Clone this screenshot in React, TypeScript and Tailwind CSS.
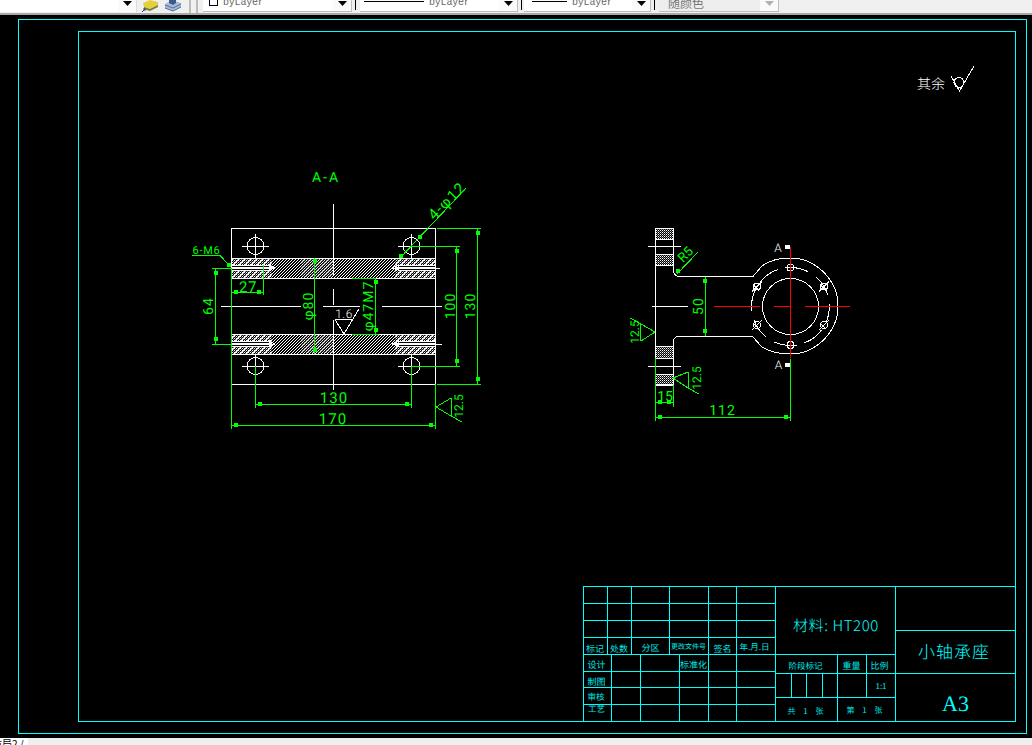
import React from "react";

const G = "#00ff00";
const C = "#00ffff";
const W = "#ffffff";
const R = "#ff0000";

type Seg = [number, number, number, number];

function Lines({ c, d }: { c: string; d: Seg[] }) {
  return (
    <g stroke={c} fill="none">
      {d.map((s, i) => (
        <line key={i} x1={s[0]} y1={s[1]} x2={s[2]} y2={s[3]} />
      ))}
    </g>
  );
}

function Ticks({ d }: { d: [number, number][] }) {
  return (
    <g fill={G} stroke="none">
      {d.map((p, i) => (
        <rect key={i} x={p[0] - 2} y={p[1] - 2} width={4} height={4} />
      ))}
    </g>
  );
}

function T({
  x,
  y,
  s,
  c = G,
  size = 14,
  rot = 0,
  ls = 0,
  cls = "font-['Roboto'] font-normal",
}: {
  x: number;
  y: number;
  s: string;
  c?: string;
  size?: number;
  rot?: number;
  ls?: number;
  cls?: string;
}) {
  return (
    <text
      x={x}
      y={y}
      fill={c}
      fontSize={size}
      letterSpacing={ls}
      textAnchor="middle"
      dominantBaseline="central"
      transform={rot ? `rotate(${rot} ${x} ${y})` : undefined}
      className={cls}
      style={{ textRendering: "geometricPrecision" }}
    >
      {s}
    </text>
  );
}

function CJK({ x, y, s, size = 9, c = "#00e6e6", ls = 0 }: { x: number; y: number; s: string; size?: number; c?: string; ls?: number }) {
  return <T x={x} y={y} s={s} size={size} c={c} ls={ls} cls="font-['Noto_Sans_CJK_SC'] font-normal" />;
}

function Hole({ x, y }: { x: number; y: number }) {
  return (
    <g stroke={W} fill="none">
      <circle cx={x} cy={y} r={8.5} />
      <line x1={x - 13.5} y1={y} x2={x + 13.5} y2={y} />
      <line x1={x} y1={y - 12} x2={x} y2={y + 12} />
    </g>
  );
}

function Bolt({ x, y, cross = false }: { x: number; y: number; cross?: boolean }) {
  return (
    <g stroke={W} fill="none">
      <circle cx={x} cy={y} r={3.5} />
      {cross ? (
        <>
          <line x1={x - 5} y1={y + 5} x2={x + 5} y2={y - 5} />
          <line x1={x - 4} y1={y - 2} x2={x + 2} y2={y + 4} />
        </>
      ) : (
        <>
          <line x1={x - 6} y1={y} x2={x + 6} y2={y} />
          <line x1={x} y1={y - 6} x2={x} y2={y + 6} />
        </>
      )}
    </g>
  );
}

function Thread({ x, y, dir }: { x: number; y: number; dir: 1 | -1 }) {
  const e = x + dir * 37;
  return (
    <g>
      <rect x={Math.min(x, e)} y={y - 3} width={37} height={6} fill="#000" />
      <Lines
        c={W}
        d={[
          [x, y - 3, e, y - 3],
          [x, y + 2, e, y + 2],
          [x, y - 1, e + dir * 3, y - 1],
          [x, y, e + dir * 3, y],
          [e, y - 4, e, y + 3],
          [e, y - 3, e + dir * 6, y],
          [e, y + 2, e + dir * 6, y],
        ]}
      />
    </g>
  );
}

function Arrow() {
  return (
    <svg width="9" height="6" viewBox="0 0 9 6" className="block">
      <path d="M0 0h9L4.5 5z" fill="currentColor" />
    </svg>
  );
}

function Combo({
  w,
  ml,
  children,
  gray = false,
}: {
  w: number;
  ml: number;
  children: React.ReactNode;
  gray?: boolean;
}) {
  return (
    <div
      className={`relative flex h-[12px] items-start overflow-hidden border-b border-r border-[#bdbdbd] ${gray ? "bg-[#eeeeee] text-[#b0b0b0]" : "bg-white text-black"}`}
      style={{ width: w, marginLeft: ml }}
    >
      {children}
      <div className="absolute right-0 top-0 flex h-[11px] w-[18px] justify-center bg-[#fafafa] pt-[1px]">
        <Arrow />
      </div>
    </div>
  );
}

function ByLayer() {
  return <span className="-mt-[3px] font-['Liberation_Mono'] text-[10px] leading-[12px] tracking-[-0.2px] text-[#666666]">byLayer</span>;
}

function Drawing() {
  return (
    <svg viewBox="0 15 1032 723" width={1032} height={723} shapeRendering="crispEdges" className="block">
      <defs>
        <pattern id="h1" patternUnits="userSpaceOnUse" width="3" height="3">
          <path d="M0 3L3 0" stroke="#fff" strokeWidth="1" />
        </pattern>
        <pattern id="h2" patternUnits="userSpaceOnUse" width="2" height="2">
          <rect x="0" y="0" width="1" height="1" fill="#fff" />
          <rect x="1" y="1" width="1" height="1" fill="#8a8a8a" />
        </pattern>
      </defs>

      {/* frames */}
      <rect x={18.5} y={19.5} width={1008} height={714} fill="none" stroke={C} />
      <rect x={78.5} y={31.5} width={937} height={690} fill="none" stroke={C} />

      {/* front section view */}
      <rect x={231.5} y={228.5} width={204} height={156} fill="none" stroke={W} />
      {[258, 334].map((y) => (
        <g key={y}>
          <rect x={232} y={y} width={203} height={20} fill="url(#h1)" />
          <rect x={232} y={y} width={40} height={20} fill="url(#h2)" />
          <rect x={395} y={y} width={40} height={20} fill="url(#h2)" />
          <rect x={301} y={y + 1} width={32} height={18} fill="url(#h2)" opacity={0.45} />
          <line x1={231} y1={y + 0.5} x2={436} y2={y + 0.5} stroke={W} />
          <line x1={231} y1={y + 20.5} x2={436} y2={y + 20.5} stroke={W} />
        </g>
      ))}
      <Thread x={232} y={268} dir={1} />
      <Thread x={435} y={268} dir={-1} />
      <Thread x={232} y={344} dir={1} />
      <Thread x={435} y={344} dir={-1} />
      <Lines
        c={W}
        d={[
          [333.5, 204, 333.5, 275],
          [333.5, 289, 333.5, 305],
          [333.5, 320, 333.5, 390],
          [221, 306.5, 301, 306.5],
          [323, 306.5, 360, 306.5],
          [382, 306.5, 442, 306.5],
          [435, 268.5, 440, 268.5],
          [435, 344.5, 442, 344.5],
          [335, 319.5, 353, 319.5],
          [335, 319.5, 344, 334],
          [344, 334, 359, 309],
        ]}
      />
      <Hole x={255.5} y={246} />
      <Hole x={411.5} y={246} />
      <Hole x={255.5} y={366} />
      <Hole x={411.5} y={366} />
      <T x={344} y={314} s="1.6" c={W} size={12} ls={0.5} cls="font-['Roboto'] font-light" />

      {/* front dimensions */}
      <Lines
        c={G}
        d={[
          [192, 255.5, 220, 255.5],
          [220, 255.5, 230, 266],
          [400, 258, 466, 188],
          [215.5, 268, 215.5, 344],
          [212, 268.5, 231, 268.5],
          [212, 344.5, 231, 344.5],
          [231.5, 268, 231.5, 429],
          [231, 292.5, 263, 292.5],
          [263.5, 265, 263.5, 295],
          [314.5, 258, 314.5, 354],
          [375.5, 278, 375.5, 334],
          [352, 278.5, 376, 278.5],
          [352, 334.5, 379, 334.5],
          [456.5, 246, 456.5, 366],
          [411, 246.5, 460, 246.5],
          [411, 366.5, 460, 366.5],
          [477.5, 228, 477.5, 384],
          [437, 228.5, 481, 228.5],
          [437, 384.5, 481, 384.5],
          [255.5, 366, 255.5, 408],
          [411.5, 366, 411.5, 408],
          [255, 404.5, 412, 404.5],
          [231, 425.5, 436, 425.5],
          [435.5, 384, 435.5, 429],
          [436, 407, 451, 398],
          [436, 407, 451, 416],
          [451, 398, 451, 416],
          [451, 416, 462, 422],
        ]}
      />
      <Ticks
        d={[
          [229, 265],
          [216, 273],
          [216, 339],
          [236, 292],
          [259, 292],
          [315, 261],
          [315, 350],
          [376, 282],
          [376, 330],
          [457, 251],
          [457, 361],
          [478, 233],
          [478, 379],
          [260, 404],
          [407, 404],
          [236, 425],
          [431, 425],
          [401, 256],
          [420, 237],
        ]}
      />
      <T x={326} y={178} s="A-A" size={14} ls={2} />
      <T x={206.5} y={250} s="6-M6" size={11} ls={0.7} />
      <T x={447} y={201} s="4-φ12" size={15} rot={-45} ls={1.2} />
      <T x={209} y={306} s="64" size={14} rot={-90} ls={1} />
      <T x={248} y={286.5} s="27" size={15} ls={0.5} />
      <T x={309} y={306} s="φ80" size={14} rot={-90} ls={1} />
      <T x={369} y={306} s="φ47M7" size={14} rot={-90} ls={1} />
      <T x={451} y={306} s="100" size={14} rot={-90} ls={1} />
      <T x={471} y={306} s="130" size={14} rot={-90} ls={1} />
      <T x={334} y={398} s="130" size={15} ls={1} />
      <T x={333} y={419} s="170" size={15} ls={1} />
      <T x={459} y={406} s="12.5" size={12} rot={-90} />

      {/* side view */}
      <g stroke={W} fill="none">
        <path d="M655.5 228.5V384.5H673.5V341.5Q674 336.5 678.5 336.5H752.5L762 347Q773 354 790 354C816 354 838 332 838 306C838 280 816 258 790 258Q773 258 762 266L753 276.5H679.5Q673.5 276 673.5 270V228.5Z" />
        <circle cx={790.5} cy={306.5} r={28} />
        <circle cx={790.5} cy={306.5} r={39} strokeDasharray="22 9" strokeDashoffset="6" />
      </g>
      {[
        [656, 229, 10],
        [656, 255, 10],
        [656, 347, 11],
        [656, 375, 10],
      ].map((r, i) => (
        <g key={i}>
          <rect x={r[0]} y={r[1]} width={17} height={r[2]} fill="url(#h2)" />
          <line x1={655} y1={r[1] - 0.5} x2={674} y2={r[1] - 0.5} stroke={W} />
          <line x1={655} y1={r[1] + r[2] + 0.5} x2={674} y2={r[1] + r[2] + 0.5} stroke={W} />
        </g>
      ))}
      <Lines
        c={W}
        d={[
          [648, 246.5, 681, 246.5],
          [648, 366.5, 681, 366.5],
          [652, 306.5, 688, 306.5],
        ]}
      />
      <Bolt x={790.5} y={267.5} />
      <Bolt x={790.5} y={345} />
      <Bolt x={757} y={286.5} cross />
      <Bolt x={824} y={286.5} cross />
      <Bolt x={757} y={325} cross />
      <Bolt x={824} y={325} cross />
      <Lines
        c={R}
        d={[
          [790.5, 247, 790.5, 358],
          [714, 306.5, 760, 306.5],
          [774, 306.5, 791, 306.5],
          [805, 306.5, 850, 306.5],
        ]}
      />
      <g fill={W} stroke="none">
        <rect x={785} y={245} width={5} height={4} />
        <rect x={785} y={363} width={5} height={4} />
      </g>
      <T x={778} y={248} s="A" c={W} size={12} cls="font-['Roboto'] font-light" />
      <T x={778.5} y={365} s="A" c={W} size={12} cls="font-['Roboto'] font-light" />

      <Lines
        c={G}
        d={[
          [790.5, 359, 790.5, 421],
          [655.5, 358, 655.5, 421],
          [655, 417.5, 791, 417.5],
          [655, 402.5, 674, 402.5],
          [673.5, 385, 673.5, 407],
          [705.5, 277, 705.5, 336],
          [677, 274, 698, 252],
          [655, 332, 641, 324],
          [655, 332, 641, 341],
          [640.5, 324, 640.5, 341],
          [641, 324, 630, 318],
          [673, 378, 688, 372],
          [673, 378, 688, 388],
          [688.5, 372, 688.5, 388],
          [688, 388, 699, 394],
        ]}
      />
      <Ticks
        d={[
          [660, 417],
          [786, 417],
          [660, 402],
          [669, 402],
          [705, 281],
          [705, 331],
          [678, 271],
        ]}
      />
      <T x={722.5} y={411} s="112" size={14} ls={1} />
      <T x={665} y={397} s="15" size={14} />
      <T x={699} y={306} s="50" size={14} rot={-90} ls={1} />
      <T x={686} y={255} s="R5" size={13} rot={-45} />
      <T x={635} y={332} s="12.5" size={12} rot={-90} />
      <T x={697} y={378} s="12.5" size={12} rot={-90} />

      {/* surface note */}
      <T x={931} y={84} s="其余" c={W} size={14} cls="font-['Noto_Sans_CJK_SC'] font-light" />
      <g stroke={W} fill="none">
        <path d="M951 76L959.5 91L974 66" />
        <circle cx={959} cy={82.5} r={5} />
      </g>

      {/* title block */}
      <rect x={583.5} y={586.5} width={432} height={135} fill="none" stroke={C} />
      <Lines
        c={C}
        d={[
          [583, 603.5, 776, 603.5],
          [583, 620.5, 776, 620.5],
          [583, 637.5, 776, 637.5],
          [583, 654.5, 896, 654.5],
          [583, 671.5, 776, 671.5],
          [583, 687.5, 776, 687.5],
          [583, 704.5, 776, 704.5],
          [607.5, 586, 607.5, 654],
          [631.5, 586, 631.5, 654],
          [669.5, 586, 669.5, 654],
          [708.5, 586, 708.5, 721],
          [736.5, 586, 736.5, 721],
          [775.5, 586, 775.5, 721],
          [611.5, 654, 611.5, 721],
          [640.5, 654, 640.5, 721],
          [679.5, 654, 679.5, 721],
          [895.5, 586, 895.5, 721],
          [895, 630.5, 1015, 630.5],
          [775, 673.5, 1015, 673.5],
          [775, 697.5, 896, 697.5],
          [837.5, 654, 837.5, 721],
          [866.5, 654, 866.5, 697],
          [791.5, 673, 791.5, 697],
          [806.5, 673, 806.5, 697],
          [822.5, 673, 822.5, 697],
        ]}
      />
      <CJK x={595} y={648} s="标记" size={9} />
      <CJK x={619} y={648} s="处数" size={9} />
      <CJK x={650.5} y={647} s="分区" size={9} />
      <CJK x={688.5} y={647} s="更改文件号" size={7} />
      <CJK x={722.5} y={648} s="签名" size={9} />
      <CJK x={754.5} y={647} s="年.月.日" size={8.5} />
      <CJK x={596.5} y={664} s="设计" size={9} />
      <CJK x={596.5} y={681} s="制图" size={9} />
      <CJK x={596} y={697} s="审核" size={8.5} />
      <CJK x={596.5} y={708.5} s="工艺" size={8.5} />
      <CJK x={693.5} y={664} s="标准化" size={9} />
      <CJK x={805.5} y={666} s="阶段标记" size={8.5} />
      <CJK x={851.5} y={665.5} s="重量" size={9} />
      <CJK x={879.5} y={665.5} s="比例" size={9} />
      <CJK x={881} y={686} s="1:1" size={8} />
      <CJK x={807} y={711} s="共 1 张" size={8} ls={3} />
      <CJK x={866} y={710} s="第 1 张" size={8} ls={3} />
      <T x={836} y={625} s="材料: HT200" c={C} size={15} ls={0.6} cls="font-['Noto_Sans_CJK_SC'] font-light" />
      <T x={954} y={650} s="小轴承座" c={C} size={17} ls={1} cls="font-['Noto_Sans_CJK_SC'] font-light" />
      <T x={955.5} y={703} s="A3" c={C} size={22} cls="font-['Liberation_Serif'] font-normal" />
    </svg>
  );
}

export default function App() {
  return (
    <div className="flex h-[745px] w-[1032px] flex-col overflow-hidden bg-black">
      <div className="flex h-[15px] shrink-0 items-start overflow-hidden border-b-2 border-[#a9a9a9] bg-[#f0f0f0]">
        <div className="relative h-[12px] w-[137px] shrink-0 border-r border-[#dddddd] bg-white">
          <div className="absolute right-0 top-0 flex h-[11px] w-[18px] justify-center bg-[#fafafa] pt-[1px] text-black">
            <Arrow />
          </div>
        </div>
        <svg width="18" height="13" viewBox="0 0 18 13" className="ml-[4px] shrink-0">
          <path d="M2 3l7-3 8 2v3l-8 4-6-2z" fill="#e6cf3c" />
          <path d="M3 7l6 2 8-4v2l-8 4-6-2z" fill="#6f7f2a" />
          <path d="M1 12l3-3m-2 0h2v2" fill="none" stroke="#1f3f8f" />
        </svg>
        <svg width="18" height="13" viewBox="0 0 18 13" className="ml-[5px] shrink-0">
          <path d="M1 4l7-4 9 3v4l-8 4-8-3z" fill="#a9bbd4" />
          <path d="M1 5l8 3 8-4M1 8l8 3 8-4" fill="none" stroke="#4f6f9f" />
          <path d="M5 0h7v3l-3 2-4-2z" fill="#3a5a8a" />
        </svg>
        <div className="ml-[7px] h-[13px] w-[2px] shrink-0 bg-[#bbbbbb]" />
        <div className="ml-[5px] h-[13px] w-[2px] shrink-0 bg-[#bbbbbb]" />
        <Combo w={149} ml={5}>
          <span className="ml-[6px] mr-[5px] -mt-[3px] block h-[9px] w-[9px] shrink-0 border border-black bg-white" />
          <ByLayer />
        </Combo>
        <div className="ml-[3px] h-[10px] w-px shrink-0 bg-black" />
        <Combo w={158} ml={4}>
          <span className="ml-[4px] mr-[5px] mt-[1px] block h-px w-[60px] shrink-0 bg-black" />
          <ByLayer />
        </Combo>
        <div className="ml-[3px] h-[10px] w-px shrink-0 bg-black" />
        <Combo w={127} ml={2}>
          <span className="ml-[8px] mr-[5px] mt-[1px] block h-px w-[35px] shrink-0 bg-black" />
          <ByLayer />
        </Combo>
        <div className="ml-[3px] h-[10px] w-px shrink-0 bg-black" />
        <Combo w={120} ml={4} gray>
          <span className="-mt-[4px] ml-[9px] font-['Noto_Sans_CJK_SC'] text-[12px] leading-[14px] text-[#777777]">随颜色</span>
        </Combo>
      </div>
      <div className="h-[723px] shrink-0 bg-black">
        <Drawing />
      </div>
      <div className="flex h-[7px] shrink-0 overflow-hidden bg-[#efefef]">
        <div className="h-[7px] w-[28px] shrink-0 overflow-hidden whitespace-nowrap bg-white">
          <span className="-ml-[8px] block font-['Noto_Sans_CJK_SC'] text-[10px] leading-[12px] text-black">布局2 /</span>
        </div>
      </div>
    </div>
  );
}
